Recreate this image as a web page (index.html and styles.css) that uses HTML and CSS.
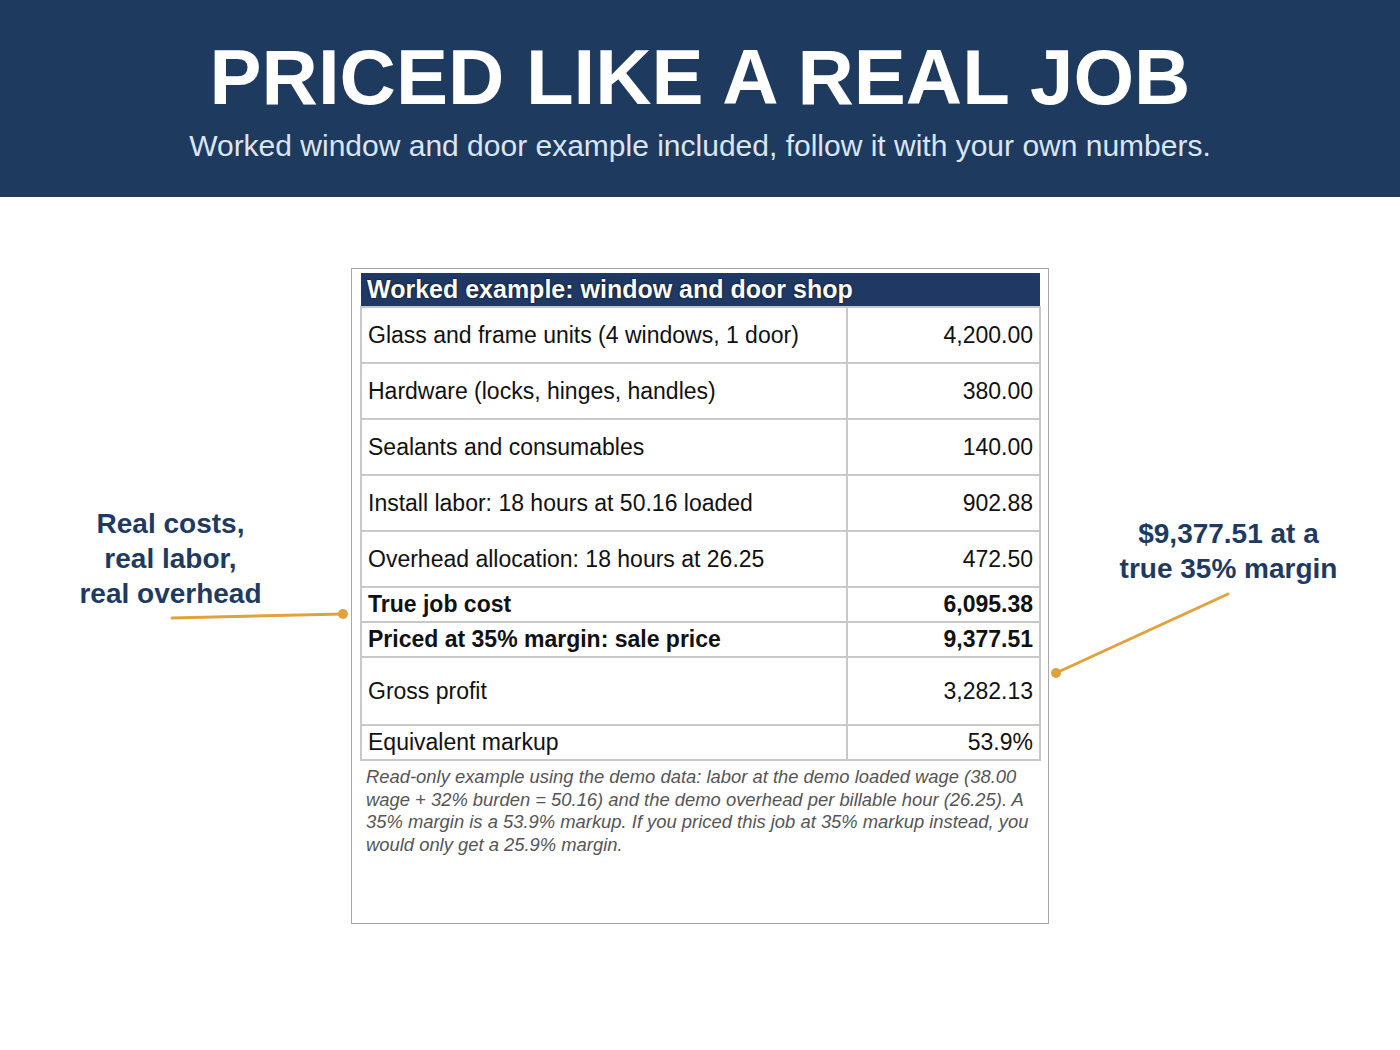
FILE: index.html
```html
<!DOCTYPE html>
<html>
<head>
<meta charset="utf-8">
<link rel="stylesheet" href="styles.css">
</head>
<body>
<header class="hero">
  <h1 class="hero-title">PRICED LIKE A REAL JOB</h1>
  <p class="hero-sub">Worked window and door example included, follow it with your own numbers.</p>
</header>
<main class="stage">
  <div class="note-left">Real costs,<br>real labor,<br>real overhead</div>
  <div class="shot">
    <table class="example">
      <thead>
        <tr><th colspan="2">Worked example: window and door shop</th></tr>
      </thead>
      <tbody>
        <tr class="tall"><td>Glass and frame units (4 windows, 1 door)</td><td class="num">4,200.00</td></tr>
        <tr class="tall"><td>Hardware (locks, hinges, handles)</td><td class="num">380.00</td></tr>
        <tr class="tall"><td>Sealants and consumables</td><td class="num">140.00</td></tr>
        <tr class="tall"><td>Install labor: 18 hours at 50.16 loaded</td><td class="num">902.88</td></tr>
        <tr class="tall"><td>Overhead allocation: 18 hours at 26.25</td><td class="num">472.50</td></tr>
        <tr class="short bold"><td>True job cost</td><td class="num">6,095.38</td></tr>
        <tr class="short bold"><td>Priced at 35% margin: sale price</td><td class="num">9,377.51</td></tr>
        <tr class="xtall"><td>Gross profit</td><td class="num">3,282.13</td></tr>
        <tr class="short"><td>Equivalent markup</td><td class="num">53.9%</td></tr>
      </tbody>
    </table>
    <p class="footnote">Read-only example using the demo data: labor at the demo loaded wage (38.00 wage + 32% burden = 50.16) and the demo overhead per billable hour (26.25). A 35% margin is a 53.9% markup. If you priced this job at 35% markup instead, you would only get a 25.9% margin.</p>
  </div>
  <div class="note-right">$9,377.51 at a<br>true 35% margin</div>
  <svg class="connectors" width="1400" height="853" viewBox="0 197 1400 853">
    <line x1="172" y1="618" x2="343" y2="614" class="wire"/>
    <circle cx="343" cy="614" r="5" class="dot"/>
    <line x1="1228" y1="594" x2="1056" y2="673" class="wire"/>
    <circle cx="1056" cy="673" r="5" class="dot"/>
  </svg>
</main>
</body>
</html>
```
FILE: styles.css
```css
* { box-sizing: border-box; }
html, body { margin: 0; padding: 0; background: #ffffff; }
body { font-family: "Liberation Sans", Arial, sans-serif; width: 1400px; height: 1050px; overflow: hidden; }

.hero {
  background: #1f3a5f;
  height: 197px;
  text-align: center;
  padding-top: 33px;
}
.hero-title {
  margin: 0;
  color: #ffffff;
  font-size: 78px;
  font-weight: 700;
  line-height: 88px;
  letter-spacing: 0;
}
.hero-sub {
  margin: 8px 0 0 0;
  color: #dbe6f3;
  font-size: 30px;
  line-height: 34px;
}

.stage {
  position: relative;
  display: flex;
  height: 853px;
  padding-top: 71px;
}
.note-left, .note-right {
  color: #1f3a5f;
  font-weight: 700;
  font-size: 28px;
  line-height: 35px;
  text-align: center;
}
.note-left { width: 351px; padding-top: 238px; padding-right: 10px; }
.note-right { width: 351px; padding-top: 248px; padding-left: 8px; }

.shot {
  width: 698px;
  height: 656px;
  border: 1px solid #a8a8a8;
  padding: 4px 8px 0 8px;
  background: #fff;
}
.example {
  width: 681px;
  border-collapse: collapse;
  font-family: "Liberation Sans", Arial, sans-serif;
  font-size: 23px;
  color: #111;
}
.example th {
  background: #1f3864;
  color: #fff;
  text-align: left;
  font-size: 25px;
  font-weight: 700;
  height: 34px;
  padding: 0 6px;
  text-shadow: 0 0 2px #000;
  border: none;
}
.example td {
  border: 2px solid #c8c8c8;
  padding: 0 6px;
  vertical-align: middle;
}
.example td:first-child { width: 486px; }
.example td.num { text-align: right; }
.example tr.tall td { height: 56px; }
.example tr.short td { height: 35px; }
.example tr.xtall td { height: 68px; }
.example tr.bold td { font-weight: 700; }

.footnote {
  margin: 5px 0 0 0;
  padding: 0 5px 0 6px;
  color: #555;
  font-style: italic;
  font-size: 18.4px;
  line-height: 22.5px;
}

.connectors {
  position: absolute;
  left: 0;
  top: 0;
  pointer-events: none;
}
.wire { stroke: #e0a23c; stroke-width: 3; stroke-linecap: round; }
.dot { fill: #e0a23c; }
```
